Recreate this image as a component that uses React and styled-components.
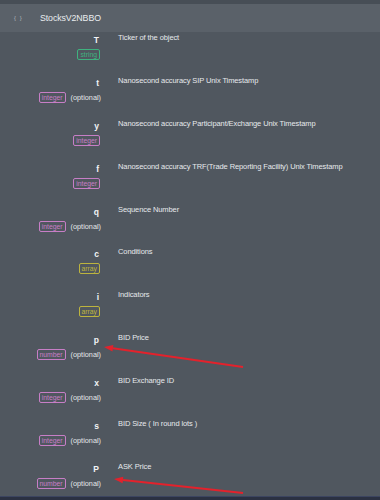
import React from 'react';
import styled, { createGlobalStyle } from 'styled-components';

const GlobalStyle = createGlobalStyle`
  html, body {
    margin: 0;
    padding: 0;
    background: #50575f;
  }
  body {
    font-family: "Liberation Sans", Arial, sans-serif;
  }
`;

const Page = styled.div`
  position: relative;
  width: 380px;
  height: 500px;
  overflow: hidden;
  background: #50575f;
  border-top: 4px solid #474e56;
  box-sizing: border-box;
`;

const Header = styled.div`
  display: flex;
  align-items: center;
  height: 28px;
  background: #5a6169;
  color: #e9ecef;
`;

const Braces = styled.span`
  width: 40px;
  padding-left: 14px;
  box-sizing: border-box;
  font-size: 6px;
  color: #aeb4ba;
  letter-spacing: 1px;
`;

const Title = styled.span`
  font-size: 8.8px;
  letter-spacing: -0.1px;
`;

const List = styled.div`
  display: flex;
  flex-direction: column;
`;

const Row = styled.div`
  display: grid;
  grid-template-columns: 101px 1fr;
  column-gap: 17px;
  height: 42.9px;
`;

const Left = styled.div`
  display: flex;
  flex-direction: column;
  align-items: flex-end;
`;

const Name = styled.div`
  margin-top: 4px;
  margin-right: 2px;
  font-size: 8.5px;
  font-weight: bold;
  color: #f2f4f6;
  line-height: 9px;
`;

const TypeLine = styled.div`
  display: flex;
  align-items: center;
  gap: 5px;
  margin-top: 4px;
`;

const palette = {
  string: '#3fb27f',
  integer: '#c77ec6',
  number: '#c77ec6',
  array: '#bdb43e',
};

const Badge = styled.span`
  display: inline-block;
  box-sizing: border-box;
  height: 11px;
  line-height: 9px;
  padding: 0 2px;
  border: 1px solid ${(p) => palette[p.$type]};
  border-radius: 2px;
  color: ${(p) => palette[p.$type]};
  font-size: 6.8px;
  ${(p) => !p.$optional && 'margin-right: 1px;'}
`;

const Optional = styled.span`
  font-size: 7.3px;
  color: #e4e7ea;
  line-height: 9px;
`;

const Desc = styled.div`
  margin-top: 1px;
  font-size: 7.5px;
  line-height: 9px;
  color: #e6e9ec;
  letter-spacing: -0.1px;
`;

const BottomEdge = styled.div`
  position: absolute;
  left: 0;
  right: 0;
  bottom: 0;
  height: 3px;
  background: #2b3142;
  border-top: 1px solid #3c4560;
`;

const Arrows = styled.svg`
  position: absolute;
  left: 0;
  top: 0;
  pointer-events: none;
`;

const fields = [
  { name: 'T', type: 'string', desc: 'Ticker of the object' },
  { name: 't', type: 'integer', optional: true, desc: 'Nanosecond accuracy SIP Unix Timestamp' },
  { name: 'y', type: 'integer', desc: 'Nanosecond accuracy Participant/Exchange Unix Timestamp' },
  { name: 'f', type: 'integer', desc: 'Nanosecond accuracy TRF(Trade Reporting Facility) Unix Timestamp' },
  { name: 'q', type: 'integer', optional: true, desc: 'Sequence Number' },
  { name: 'c', type: 'array', desc: 'Conditions' },
  { name: 'i', type: 'array', desc: 'Indicators' },
  { name: 'p', type: 'number', optional: true, desc: 'BID Price' },
  { name: 'x', type: 'integer', optional: true, desc: 'BID Exchange ID' },
  { name: 's', type: 'integer', optional: true, desc: 'BID Size ( In round lots )' },
  { name: 'P', type: 'number', optional: true, desc: 'ASK Price' },
];

function Arrow({ x1, y1, x2, y2 }) {
  const a = Math.atan2(y2 - y1, x2 - x1);
  const len = 9;
  const w = 3.2;
  const bx = x2 - Math.cos(a) * len;
  const by = y2 - Math.sin(a) * len;
  const px = -Math.sin(a) * w;
  const py = Math.cos(a) * w;
  return (
    <g>
      <line x1={x1} y1={y1} x2={bx} y2={by} stroke="#e3222c" strokeWidth="2" />
      <polygon
        points={`${x2},${y2} ${bx + px},${by + py} ${bx - px},${by - py}`}
        fill="#e3222c"
      />
    </g>
  );
}

export default function App() {
  return (
    <>
      <GlobalStyle />
      <Page>
        <Header>
          <Braces>{'{ }'}</Braces>
          <Title>StocksV2NBBO</Title>
        </Header>
        <List>
          {fields.map((f, i) => (
            <Row key={i}>
              <Left>
                <Name>{f.name}</Name>
                <TypeLine>
                  <Badge $type={f.type} $optional={f.optional}>{f.type}</Badge>
                  {f.optional && <Optional>(optional)</Optional>}
                </TypeLine>
              </Left>
              <Desc>{f.desc}</Desc>
            </Row>
          ))}
        </List>
        <Arrows width="380" height="500" viewBox="0 0 380 500">
          <Arrow x1={243} y1={363} x2={104} y2={343} />
          <Arrow x1={243} y1={489} x2={114} y2={475} />
        </Arrows>
        <BottomEdge />
      </Page>
    </>
  );
}
